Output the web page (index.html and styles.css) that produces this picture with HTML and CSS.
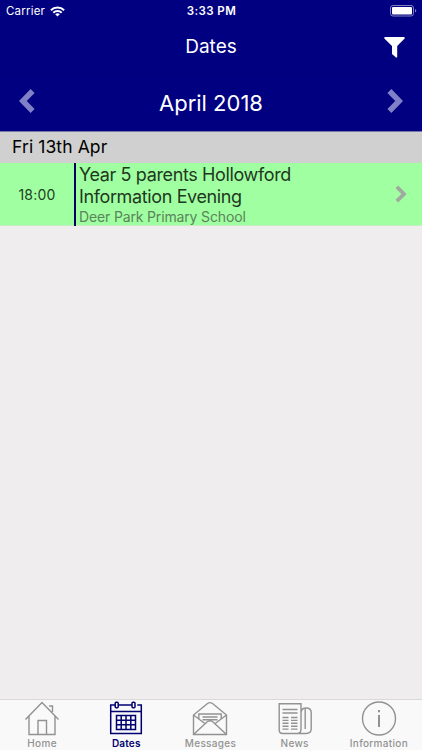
FILE: index.html
```
<!DOCTYPE html>
<html lang="en">
<head>
    <meta charset="UTF-8">
    <meta name="viewport" content="width=device-width, initial-scale=1.0">
    <title>Dates</title>
    <link rel="stylesheet" href="styles.css">
</head>
<body>
    <header>
        <div class="status-bar">
            <div class="carrier">
                <span>Carrier</span>
                <svg width="15" height="11" viewBox="0 0 15 11" fill="none" stroke="#fff" stroke-width="2">
                    <path d="M0.9 4.2a9.3 9.3 0 0 1 13.2 0"/>
                    <path d="M3.3 6.7a6 6 0 0 1 8.4 0"/>
                    <path d="M7.5 10.6L5.2 8.3a3.3 3.3 0 0 1 4.6 0z" fill="#fff" stroke="none"/>
                </svg>
            </div>
            <span class="clock">3:33 PM</span>
            <svg class="battery" width="27" height="12" viewBox="0 0 27 12">
                <rect x="0.5" y="0.5" width="23" height="10.5" rx="2.5" fill="none" stroke="#8080c0"/>
                <rect x="2" y="2" width="20" height="7.5" rx="1" fill="#fff"/>
                <path d="M25 4v3.6q1.3-.6 1.3-1.8T25 4z" fill="#8080c0"/>
            </svg>
        </div>
        <div class="title-bar">
            <h1>Dates</h1>
            <svg class="filter" width="21" height="21" viewBox="0 0 21 21" fill="#fff">
                <path d="M0.8 0h19.4q1 .8.2 1.8L13.2 9v11q-.4.9-1.2.5L8 17V9L.6 1.8Q-.2.8.8 0z"/>
            </svg>
        </div>
        <div class="month-bar">
            <svg width="16" height="24" viewBox="0 0 16 24" fill="none" stroke="#8080c8" stroke-width="5.6">
                <path d="M13.6 2L3.8 12l9.8 10"/>
            </svg>
            <h2>April 2018</h2>
            <svg width="16" height="24" viewBox="0 0 16 24" fill="none" stroke="#8080c8" stroke-width="5.6">
                <path d="M2.4 2l9.8 10-9.8 10"/>
            </svg>
        </div>
    </header>

    <main>
        <div class="day">Fri 13th Apr</div>
        <div class="event">
            <div class="event-time">18:00</div>
            <div class="event-info">
                <div class="event-title">Year 5 parents Hollowford<br>Information Evening</div>
                <div class="event-place">Deer Park Primary School</div>
            </div>
            <svg class="event-arrow" width="12" height="18" viewBox="0 0 12 18" fill="none" stroke="#a0aaa0" stroke-width="3.8">
                <path d="M1.8 1.8L9 9l-7.2 7.2"/>
            </svg>
        </div>
    </main>

    <nav>
        <a class="tab">
            <svg width="36" height="36" viewBox="0 0 36 36">
                <path d="M1.5 19.5L18 2.5l16.5 17M5 16v18.5h26V16M14 34.5v-14h8.5v14M25 6h3.5v6"/>
            </svg>
            <span>Home</span>
        </a>
        <a class="tab active">
            <svg width="36" height="36" viewBox="0 0 36 36">
                <path d="M7 5H2.7v28.5h30.6V5h-4M10 5h14M2.7 11.5h30.6"/>
                <rect x="7.2" y="2.2" width="3" height="5.6" rx="1"/>
                <rect x="24" y="2.2" width="3" height="5.6" rx="1"/>
                <path d="M8.500 15.5h19v14h-19zM13.2 15.5v14M18 15.5v14M22.8 15.5v14M8.500 20.2h19M8.500 24.8h19"/>
            </svg>
            <span>Dates</span>
        </a>
        <a class="tab">
            <svg width="36" height="36" viewBox="0 0 36 36">
                <path d="M1.5 34.5V15L15.5 3.5q2.5-1.800 5 0L34.5 15v19.5zM1.5 15l12 9M34.5 15l-12 9M2 34l13.5-12.5q2.5-1.5 5 0L34 34"/>
                <path d="M6.800 19v-5h22.4v5M10.5 17h15M10.5 19.700h15"/>
            </svg>
            <span>Messages</span>
        </a>
        <a class="tab">
            <svg width="36" height="36" viewBox="0 0 36 36">
                <path d="M24 30V3.700H2.200V30q0 3.500 3.500 3.500H29q5.200 0 5.200-4.500V12.500q0-4.500-5-4.500T24 12.500V29q0 4.500-3.500 4.500M28.200 9v20"/>
                <path d="M5.500 9.500h15M5.500 13h15M5.500 17.500h6M14 17.500h6.500M5.500 20.400h6M14 20.400h6.500M5.500 23.300h6M14 23.300h6.500M5.500 26.200h6M14 26.200h6.500M5.500 29.100h6M14 29.100h6.500"/>
            </svg>
            <span>News</span>
        </a>
        <a class="tab">
            <svg width="36" height="36" viewBox="0 0 36 36">
                <circle cx="18" cy="18.5" r="16.5"/>
                <path d="M18 15v12M18 10v2.200" stroke-width="2"/>
            </svg>
            <span>Information</span>
        </a>
    </nav>
</body>
</html>
```

FILE: styles.css
```
* {
    box-sizing: border-box;
}
body {
    margin: 0;
    height: 100vh;
    display: flex;
    flex-direction: column;
    font-family: Inter, "Liberation Sans", sans-serif;
    background-color: #efedee;
    color: #000;
    overflow: hidden;
}
svg {
    display: block;
}
header {
    height: 131px;
    background-color: #000080;
    color: #fff;
}
.status-bar {
    display: grid;
    grid-template-columns: 1fr auto 1fr;
    align-items: center;
    height: 22px;
    padding: 0 5px 0 6px;
    font-size: 11.5px;
}
.carrier {
    display: flex;
    align-items: center;
    gap: 5px;
    letter-spacing: 0.2px;
}
.clock {
    font-weight: 600;
    letter-spacing: 0.4px;
}
.battery {
    justify-self: end;
}
.title-bar {
    display: grid;
    grid-template-columns: 1fr auto 1fr;
    align-items: center;
    height: 51px;
    padding: 0 17px;
}
.title-bar h1 {
    grid-column: 2;
    margin: 0;
    padding-bottom: 2px;
    font-size: 19px;
    font-weight: 400;
}
.filter {
    justify-self: end;
}
.month-bar {
    display: flex;
    justify-content: space-between;
    align-items: center;
    height: 58px;
    padding: 0 19px;
    border-top: 1px solid #000078;
}
.month-bar svg {
    margin-bottom: 4px;
}
.month-bar h2 {
    margin: 0;
    font-size: 22px;
    font-weight: 400;
}
main {
    flex: 1;
}
.day {
    height: 32px;
    padding-left: 12px;
    background-color: #d0d0d0;
    border-top: 1px solid #7777aa;
    font-size: 17.5px;
    letter-spacing: 0.1px;
    line-height: 30px;
}
.event {
    display: flex;
    align-items: center;
    height: 63px;
    padding-right: 15px;
    background-color: #a0ffa0;
    border-bottom: 1px solid #c5eec5;
}
.event-time {
    width: 74px;
    text-align: center;
    font-size: 14px;
    letter-spacing: 0.2px;
    color: #204020;
}
.event-info {
    flex: 1;
    height: 63px;
    padding: 1px 0 0 3px;
    border-left: 2px solid #000060;
    white-space: nowrap;
}
.event-title {
    font-size: 18px;
    letter-spacing: -0.37px;
    line-height: 22px;
    color: #203820;
}
.event-place {
    font-size: 14px;
    letter-spacing: -0.15px;
    line-height: 18px;
    color: #5b835b;
}
nav {
    display: grid;
    grid-template-columns: repeat(5, 1fr);
    height: 51px;
    padding-right: 1px;
    background-color: #f9f9f9;
    border-top: 1px solid #dad8d9;
}
.tab {
    display: flex;
    flex-direction: column;
    align-items: center;
    color: #929292;
    font-size: 10px;
    font-weight: 500;
    letter-spacing: 0.3px;
    line-height: 14px;
}
.tab svg {
    fill: none;
    stroke: currentColor;
    stroke-width: 1.4;
}
.active {
    color: #000070;
    font-weight: 600;
    letter-spacing: 0.2px;
}
.active svg {
    stroke-width: 1.5;
}
```
